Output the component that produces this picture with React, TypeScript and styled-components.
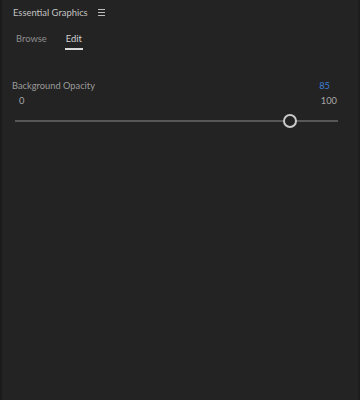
import { createGlobalStyle, styled } from "styled-components";

const GlobalStyle = createGlobalStyle`
  html, body {
    margin: 0;
    padding: 0;
    background: #232323;
  }
`;

const Panel = styled.div`
  width: 360px;
  height: 400px;
  box-sizing: border-box;
  background: #232323;
  border-left: 2px solid #1b1b1b;
  border-right: 2px solid #1d1d1d;
  font-family: Lato, "Liberation Sans", sans-serif;
  font-size: 9.3px;
  color: #bcbcbc;
`;

const TitleBar = styled.div`
  display: flex;
  align-items: center;
  gap: 10px;
  height: 24px;
  padding-left: 11px;
`;

const Title = styled.span`
  color: #c2c2c2;
  font-size: 9.4px;
`;

const MenuIcon = styled.span`
  display: flex;
  flex-direction: column;
  gap: 2px;
  width: 7px;

  i {
    display: block;
    height: 1px;
    background: #bdbdbd;
  }
`;

const Tabs = styled.div`
  display: flex;
  gap: 17px;
  padding: 9px 0 0 13px;
  height: 20px;
`;

const Tab = styled.span<{ $active?: boolean }>`
  color: ${(p) => (p.$active ? "#d2d2d2" : "#8e8e8e")};
  font-size: 9.4px;
  padding: 0 1px 2px;
  border-bottom: 2px solid ${(p) => (p.$active ? "#d8d8d8" : "transparent")};
  height: 13px;
`;

const Section = styled.div`
  padding: 24px 22px 0 10px;
`;

const LabelRow = styled.div`
  display: flex;
  justify-content: space-between;
  align-items: center;
  height: 16px;
`;

const Label = styled.span`
  color: #9b9b9b;
`;

const Value = styled.span`
  color: #3f80d6;
  margin-right: 6px;
`;

const RangeRow = styled.div`
  display: flex;
  justify-content: space-between;
  padding: 0 0 0 7px;
  margin-right: -1px;
  height: 14px;
  align-items: center;
  color: #a8a8a8;
`;

const Track = styled.div`
  position: relative;
  margin: 6px 0 0 3px;
  width: 323px;
  height: 16px;
  display: flex;
  align-items: center;
`;

const Rail = styled.div`
  width: 100%;
  height: 2px;
  background: #575757;
`;

const Thumb = styled.div`
  position: absolute;
  top: 50%;
  width: 10px;
  height: 10px;
  border: 2px solid #c9c9c9;
  border-radius: 50%;
  background: #232323;
  transform: translate(-50%, -50%);
`;

export default function App() {
  const value = 85;
  return (
    <>
      <GlobalStyle />
      <Panel>
        <TitleBar>
          <Title>Essential Graphics</Title>
          <MenuIcon>
            <i />
            <i />
            <i />
          </MenuIcon>
        </TitleBar>
        <Tabs>
          <Tab>Browse</Tab>
          <Tab $active>Edit</Tab>
        </Tabs>
        <Section>
          <LabelRow>
            <Label>Background Opacity</Label>
            <Value>{value}</Value>
          </LabelRow>
          <RangeRow>
            <span>0</span>
            <span>100</span>
          </RangeRow>
          <Track>
            <Rail />
            <Thumb style={{ left: `${value}%` }} />
          </Track>
        </Section>
      </Panel>
    </>
  );
}
